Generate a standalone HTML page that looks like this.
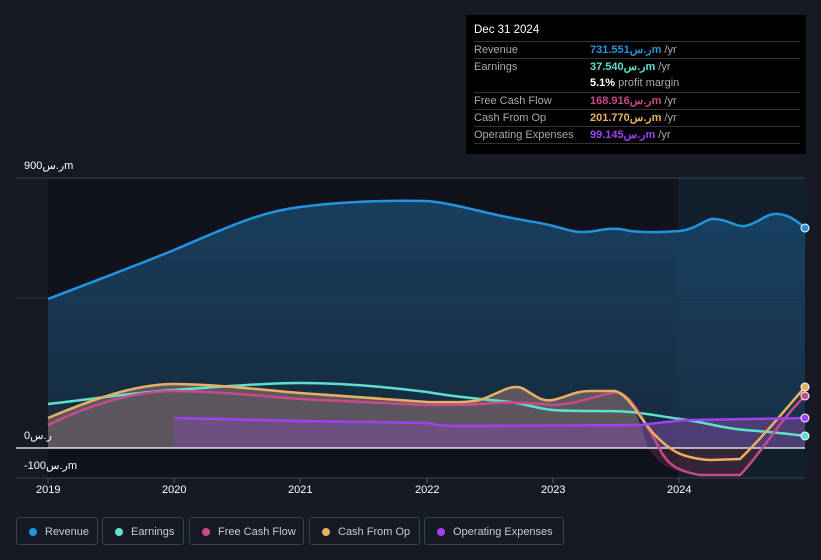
<!DOCTYPE html>
<html><head><meta charset="utf-8"><style>
body{margin:0;width:821px;height:560px;background:#151a24;font-family:"Liberation Sans","Noto Sans CJK SC",sans-serif;overflow:hidden;position:relative;color:#ddd}
.tt{position:absolute;left:466px;top:15px;width:340px;height:139px;background:#000;font-size:11px}
.tt .h{position:absolute;left:8px;top:9px;color:#fff;font-size:11.5px}
.row{position:absolute;left:8px;width:326px;border-top:1px solid #333;height:17px;line-height:17px;color:#aaa}
.row span{position:absolute;left:116px}
.lg{position:absolute;top:517px;height:28px;border:1px solid #3a4150;border-radius:3px;font-size:11px;color:#ccc;line-height:28px;box-sizing:border-box}
.lg i{position:absolute;left:12px;top:10px;width:8px;height:8px;border-radius:50%}
.lg b{font-weight:normal;position:absolute;left:28px}
.ax{position:absolute;font-size:11px;color:#fff}
</style></head><body>
<svg width="821" height="560" style="position:absolute;left:0;top:0">
<defs><linearGradient id="rg" x1="0" y1="0" x2="0" y2="1"><stop offset="0" stop-color="#1a4a70" stop-opacity=".8"/><stop offset="1" stop-color="#1a3a55" stop-opacity=".6"/></linearGradient></defs>
<rect x="48" y="178" width="630" height="300" fill="#10131b"/>
<rect x="678" y="178" width="127" height="300" fill="#12202e"/>
<line x1="16" y1="178" x2="805" y2="178" stroke="#3a404c"/>
<line x1="16" y1="298" x2="805" y2="298" stroke="#2c3a4a"/>
<line x1="16" y1="478" x2="805" y2="478" stroke="#3a404c"/>
<path d="M48,299 C100,279 140,264 174,250 C230,226 260,212 300,207 C340,202 380,200 427,201 C450,203 465,208 480,211 C520,221 540,222 553,226 C570,230 575,234 595,231 C610,228 618,228 630,231 C650,233 660,232 680,231 C700,228 705,218 715,219 C730,220 735,227 745,226 C760,223 765,213 778,214 C790,215 798,222 805,228 L805,448 L48,448 Z" fill="url(#rg)"/>
<path d="M48,418 C100,396 140,384 174,384 C230,385 260,390 300,393 L427,402 C450,402 465,403 480,400 C500,393 510,384 522,388 C535,395 540,402 553,400 C570,396 575,391 590,391 L615,391 C630,395 640,420 648,448 L48,448 Z" fill="#7a6a6a" opacity=".7"/>
<path d="M174,418 L300,421 L427,423 C440,426 450,426 460,426 L640,425 C660,423 670,421 690,420 L805,418 L805,448 L174,448 Z" fill="#7a4a9a" opacity=".55"/>
<path d="M648,448 C660,465 670,472 700,475 L740,475 C750,465 755,455 762,448 Z" fill="#5a2a40" opacity=".5"/>
<line x1="16" y1="448" x2="805" y2="448" stroke="#fff" stroke-width="1.2"/>
<g fill="none" stroke-width="2.5">
<path d="M48,299 C100,279 140,264 174,250 C230,226 260,212 300,207 C340,202 380,200 427,201 C450,203 465,208 480,211 C520,221 540,222 553,226 C570,230 575,234 595,231 C610,228 618,228 630,231 C650,233 660,232 680,231 C700,228 705,218 715,219 C730,220 735,227 745,226 C760,223 765,213 778,214 C790,215 798,222 805,228" stroke="#2394e0"/>
<path d="M48,404 C100,398 140,392 174,390 C230,386 270,383 300,383 C340,383 380,386 427,392 C450,396 470,398 510,402 C530,405 540,409 553,410 C580,412 610,410 630,412 C650,414 665,417 680,419 C710,423 720,428 745,430 C770,432 790,434 805,436" stroke="#5fe0cc"/>
<path d="M48,425 C100,400 140,391 174,391 C230,392 260,396 300,399 L427,405 C450,405 465,405 480,404 C510,401 530,403 553,405 C575,404 590,398 615,392 C630,392 640,415 655,440 C665,460 670,470 700,475 L740,475 C760,455 780,420 805,396" stroke="#c94a8a"/>
<path d="M48,418 C100,396 140,384 174,384 C230,385 260,390 300,393 L427,402 C450,402 465,403 480,400 C500,393 510,384 522,388 C535,395 540,402 553,400 C570,396 575,391 590,391 L615,391 C630,395 640,420 655,435 C670,450 680,458 710,460 L740,459 C760,440 785,410 805,387" stroke="#e8b060"/>
<path d="M174,418 L300,421 L427,423 C440,426 450,426 460,426 L640,425 C660,423 670,421 690,420 L805,418" stroke="#a040f0"/>
</g>
<g stroke="#fff" stroke-width="1">
<circle cx="805" cy="228" r="4" fill="#2394e0"/><circle cx="805" cy="387" r="4" fill="#e8b060"/><circle cx="805" cy="396" r="4" fill="#c94a8a"/><circle cx="805" cy="418" r="4" fill="#a040f0"/><circle cx="805" cy="436" r="4" fill="#5fe0cc"/>
</g>
<g stroke="#555"><line x1="48" y1="478" x2="48" y2="483"/><line x1="174" y1="478" x2="174" y2="483"/><line x1="300" y1="478" x2="300" y2="483"/><line x1="427" y1="478" x2="427" y2="483"/><line x1="553" y1="478" x2="553" y2="483"/><line x1="679" y1="478" x2="679" y2="483"/></g>
</svg>
<div class="ax" style="left:24px;top:159px">900ر.سm</div>
<div class="ax" style="left:24px;top:429px">0ر.س</div>
<div class="ax" style="left:24px;top:459px">-100ر.سm</div>
<div class="ax" style="left:36px;top:484px">2019</div>
<div class="ax" style="left:162px;top:484px">2020</div>
<div class="ax" style="left:288px;top:484px">2021</div>
<div class="ax" style="left:415px;top:484px">2022</div>
<div class="ax" style="left:541px;top:484px">2023</div>
<div class="ax" style="left:667px;top:484px">2024</div>
<div class="tt"><div class="h">Dec 31 2024</div>
<div class="row" style="top:26px">Revenue<span style="color:#2394e0"><b>731.551ر.سm</b> <span style="position:static;color:#aaa">/yr</span></span></div>
<div class="row" style="top:43px">Earnings<span style="color:#5fe0cc"><b>37.540ر.سm</b> <span style="position:static;color:#aaa">/yr</span></span></div>
<div class="row" style="top:60px;border:none"><span style="color:#fff"><b>5.1%</b> <span style="position:static;color:#aaa">profit margin</span></span></div>
<div class="row" style="top:77px">Free Cash Flow<span style="color:#c94a8a"><b>168.916ر.سm</b> <span style="position:static;color:#aaa">/yr</span></span></div>
<div class="row" style="top:94px">Cash From Op<span style="color:#e8b060"><b>201.770ر.سm</b> <span style="position:static;color:#aaa">/yr</span></span></div>
<div class="row" style="top:111px">Operating Expenses<span style="color:#a040f0"><b>99.145ر.سm</b> <span style="position:static;color:#aaa">/yr</span></span></div>
<div class="row" style="top:128px;height:0"></div>
</div>
<div class="lg" style="left:16px;width:82px"><i style="background:#2394e0"></i><b>Revenue</b></div>
<div class="lg" style="left:102px;width:82px"><i style="background:#5fe0cc"></i><b>Earnings</b></div>
<div class="lg" style="left:189px;width:115px"><i style="background:#c94a8a"></i><b>Free Cash Flow</b></div>
<div class="lg" style="left:309px;width:111px"><i style="background:#e8b060"></i><b>Cash From Op</b></div>
<div class="lg" style="left:424px;width:140px"><i style="background:#a040f0"></i><b>Operating Expenses</b></div>
</body></html>
